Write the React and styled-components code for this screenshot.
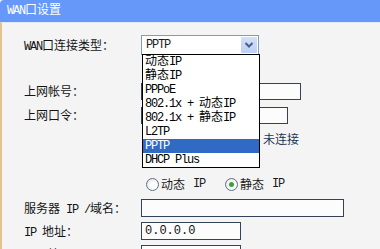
import React from "react";
import styled, { createGlobalStyle } from "styled-components";

const GlobalStyle = createGlobalStyle`
  html, body { margin: 0; padding: 0; background: #f4f4f4; }
  body {
    font-family: "Liberation Mono", "Noto Sans CJK SC", monospace;
    font-size: 12px;
    color: #1b1b1b;
  }
`;

const Lat = styled.span`
  letter-spacing: -1.2px;
  white-space: pre;
`;

const mix = (s) =>
  s
    .split(/([\x20-\x7e]+)/)
    .filter(Boolean)
    .map((p, i) => (/^[\x20-\x7e]+$/.test(p) ? <Lat key={i}>{p}</Lat> : p));

const Panel = styled.div`
  width: 100%;
  height: 249px;
  overflow: hidden;
  background: #f4f4f4;
`;

const Header = styled.div`
  height: 22px;
  background: #6598f8;
  color: #fff;
  padding-left: 7px;
  display: flex;
  align-items: center;
  border-top-left-radius: 4px;
  line-height: 1;
`;

const Body = styled.div`
  border-left: 2px solid #e2c391;
  border-top: 1px solid #e1e9f9;
  padding: 10px 0 0 22px;
  display: flex;
  flex-direction: column;
  height: 240px;
  box-sizing: border-box;
`;

const Row = styled.div`
  display: flex;
  align-items: center;
  height: ${(p) => p.$h}px;
  flex: none;
`;

const Spacer = styled.div`
  height: ${(p) => p.$h}px;
  flex: none;
`;

const Label = styled.div`
  width: 117px;
  flex: none;
  white-space: nowrap;
  color: #141414;
`;

const Field = styled.div`
  display: flex;
  align-items: center;
  position: relative;
  padding-left: ${(p) => p.$pad || 0}px;
`;

const Select = styled.div`
  position: relative;
  width: 118px;
  height: 20px;
  box-sizing: border-box;
  border: 1px solid #7f9db9;
  background: #fff;
  display: flex;
  align-items: center;
  padding-left: 4px;
`;

const Arrow = styled.div`
  position: absolute;
  right: 1px;
  top: 1px;
  width: 16px;
  height: 16px;
  background: linear-gradient(#d3e0fa, #bccff5);
  border-radius: 1px;
  display: flex;
  align-items: center;
  justify-content: center;
`;

const ListBox = styled.ul`
  position: absolute;
  left: 0;
  top: 100%;
  width: 118px;
  box-sizing: border-box;
  border: 1px solid #000;
  background: #fff;
  margin: 0;
  padding: 0;
  list-style: none;
  z-index: 2;
`;

const Option = styled.li`
  height: 14px;
  line-height: 14px;
  padding-left: 2px;
  white-space: nowrap;
  background: ${(p) => (p.$selected ? "#316ac5" : "#fff")};
  color: ${(p) => (p.$selected ? "#fff" : "#000")};
`;

const TextInput = styled.input`
  width: ${(p) => p.$w}px;
  height: ${(p) => p.$h}px;
  box-sizing: border-box;
  border: 1px solid #35435a;
  background: #fcfcfc;
  padding: 0 3px;
  margin: 0;
  font: inherit;
  color: #111;
  outline: none;
`;

const Status = styled.span`
  color: #1e3552;
  margin-left: 122px;
`;

const RadioOption = styled.label`
  display: inline-flex;
  align-items: center;
  width: ${(p) => p.$w}px;
  gap: 2px;
  white-space: nowrap;
  color: #1b1b1b;
`;

const RadioDot = styled.span`
  width: 13px;
  height: 13px;
  box-sizing: border-box;
  border-radius: 50%;
  border: 1px solid #5b7289;
  background: radial-gradient(circle at 60% 60%, #ffffff 30%, #dedbd2 100%);
  display: inline-flex;
  align-items: center;
  justify-content: center;
  &::after {
    content: "";
    width: 5px;
    height: 5px;
    border-radius: 50%;
    background: ${(p) => (p.$checked ? "#3aa13a" : "transparent")};
  }
`;

const options = [
  "动态IP",
  "静态IP",
  "PPPoE",
  "802.1x + 动态IP",
  "802.1x + 静态IP",
  "L2TP",
  "PPTP",
  "DHCP Plus",
];

export default function App() {
  return (
    <>
      <GlobalStyle />
      <Panel>
        <Header>{mix("WAN口设置")}</Header>
        <Body>
          <Row $h={24}>
            <Label>{mix("WAN口连接类型：")}</Label>
            <Field>
              <Select>
                {mix("PPTP")}
                <Arrow>
                  <svg width="10" height="8" viewBox="0 0 10 8">
                    <polyline
                      points="1.5,2 5,5.5 8.5,2"
                      fill="none"
                      stroke="#4b5f86"
                      strokeWidth="2"
                    />
                  </svg>
                </Arrow>
                <ListBox>
                  {options.map((o) => (
                    <Option key={o} $selected={o === "PPTP"}>
                      {mix(o)}
                    </Option>
                  ))}
                </ListBox>
              </Select>
            </Field>
          </Row>
          <Spacer $h={22} />
          <Row $h={24}>
            <Label>上网帐号：</Label>
            <Field>
              <TextInput $w={160} $h={17} readOnly value="" />
            </Field>
          </Row>
          <Row $h={24}>
            <Label>上网口令：</Label>
            <Field>
              <TextInput $w={147} $h={17} type="password" readOnly value="" />
            </Field>
          </Row>
          <Row $h={24}>
            <Label />
            <Field>
              <Status>未连接</Status>
            </Field>
          </Row>
          <Spacer $h={21} />
          <Row $h={24}>
            <Label />
            <Field $pad={5}>
              <RadioOption $w={79}>
                <RadioDot />
                {mix("动态 IP")}
              </RadioOption>
              <RadioOption $w={80}>
                <RadioDot $checked />
                {mix("静态 IP")}
              </RadioOption>
            </Field>
          </Row>
          <Row $h={23}>
            <Label>{mix("服务器 IP /域名：")}</Label>
            <Field>
              <TextInput $w={203} $h={18} readOnly value="" />
            </Field>
          </Row>
          <Row $h={23}>
            <Label>{mix("IP 地址：")}</Label>
            <Field>
              <TextInput $w={100} $h={18} readOnly value="0.0.0.0" />
            </Field>
          </Row>
          <Row $h={24}>
            <Label>子网掩码：</Label>
            <Field>
              <TextInput $w={100} $h={18} readOnly value="" />
            </Field>
          </Row>
        </Body>
      </Panel>
    </>
  );
}
